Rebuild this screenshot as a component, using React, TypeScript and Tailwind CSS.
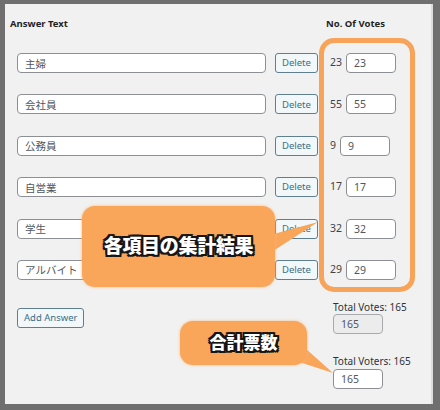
import React from 'react';

const rows = [
  { text: '主婦', votes: 23 },
  { text: '会社員', votes: 55 },
  { text: '公務員', votes: 9 },
  { text: '自営業', votes: 17 },
  { text: '学生', votes: 32 },
  { text: 'アルバイト', votes: 29 },
];

const outline =
  '[text-shadow:2px_0_0_#151515,-2px_0_0_#151515,0_2px_0_#151515,0_-2px_0_#151515,2px_2px_0_#151515,-2px_-2px_0_#151515,2px_-2px_0_#151515,-2px_2px_0_#151515]';

function Field({ value, width, disabled }: { value: string | number; width: string; disabled?: boolean }) {
  return (
    <input
      readOnly
      value={value}
      className={
        'block h-[20px] rounded-[4px] border pl-[7px] text-[10.5px] text-[#50575e] outline-none ' +
        width +
        (disabled ? ' border-[#a7aaad] bg-[#ececec]' : ' border-[#8c8f94] bg-white')
      }
    />
  );
}

function SmallButton({ children }: { children: React.ReactNode }) {
  return (
    <button className="block h-[20px] rounded-[3px] border border-[#5f7f8e] bg-[#f2f7f9] px-[6px] text-[9.5px] leading-none text-[#3a6f87]">
      {children}
    </button>
  );
}

export default function App() {
  return (
    <div className="h-[410px] w-[440px] bg-[#6f6f6f] pb-[6px] pl-[5px] pr-[7px] pt-[4px] font-['Noto_Sans','Noto_Sans_CJK_JP',sans-serif]">
      <div className="relative h-full border-r-2 border-[#dcdcdc] bg-[#f1f1f1] pl-[5px] pt-[13px] text-[#1d2327]">
        {/* Header */}
        <div className="flex text-[9.5px] font-bold leading-[14px]">
          <span className="w-[316px]">Answer Text</span>
          <span>No. Of Votes</span>
        </div>

        {/* Answer rows */}
        <div className="mt-[22px] flex flex-col gap-y-[21.4px] pl-[7px]">
          {rows.map((r) => (
            <div key={r.text} className="flex h-[20px] items-center">
              <Field value={r.text} width="w-[249px]" />
              <div className="ml-[9px] flex w-[40px]">
                <SmallButton>Delete</SmallButton>
              </div>
              <div className="ml-[15px] flex items-center gap-[4px] text-[10.5px] text-[#3c434a]">
                <span>{r.votes}</span>
                <Field value={r.votes} width="w-[50px]" />
              </div>
            </div>
          ))}
        </div>

        {/* Bottom */}
        <div className="mt-[21px] flex">
          <div className="w-[316px] pl-[7px] pt-[7px]">
            <SmallButton>Add Answer</SmallButton>
          </div>
          <div className="ml-[7px] flex flex-col text-[10px] leading-[13px] text-[#2c3338]">
            <span>Total Votes: 165</span>
            <Field value={165} width="w-[50px]" disabled />
            <span className="mt-[21px]">Total Voters: 165</span>
            <div className="mt-[1px]">
              <Field value={165} width="w-[50px]" />
            </div>
          </div>
        </div>

        {/* Annotations */}
        <div className="pointer-events-none absolute left-[314px] top-[34px] h-[254px] w-[96px] rounded-[15px] border-[5px] border-[#f7a45a]" />
        <svg className="pointer-events-none absolute left-0 top-0" width="428" height="400">
          <polygon points="265,231 313,218 265,249" fill="#f9a65b" />
          <polygon points="288,356 328,369 300,344" fill="#f9a65b" />
        </svg>
        <div className="pointer-events-none absolute left-[77px] top-[202px] flex h-[81px] w-[193px] items-center justify-center rounded-[13px] bg-[#f9a65b] shadow-[0_0_3px_#f9b87a]">
          <span className={'text-[19px] font-black tracking-[-0.3px] text-white ' + outline}>各項目の集計結果</span>
        </div>
        <div className="pointer-events-none absolute left-[175px] top-[317px] flex h-[44px] w-[127px] items-center justify-center rounded-[13px] bg-[#f9a65b] shadow-[0_0_3px_#f9b87a]">
          <span className={'text-[17px] font-black text-white ' + outline}>合計票数</span>
        </div>
      </div>
    </div>
  );
}
